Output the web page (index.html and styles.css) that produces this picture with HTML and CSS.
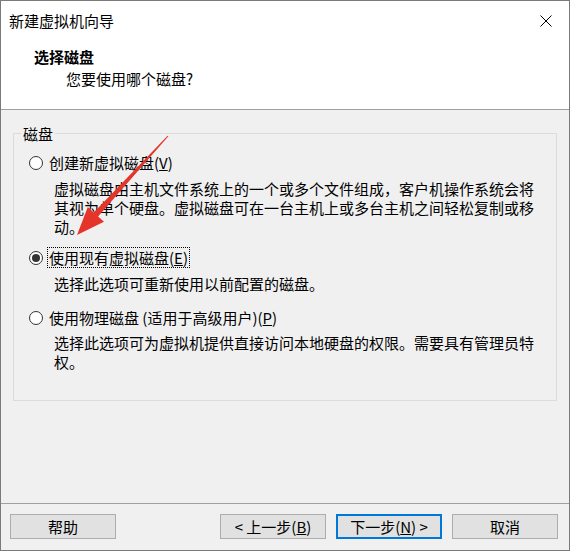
FILE: index.html
```html
<!DOCTYPE html>
<html lang="zh-CN">
<head>
<meta charset="utf-8">
<title>新建虚拟机向导</title>
<link rel="stylesheet" href="styles.css">
</head>
<body>
<div class="window">
  <div class="titlebar">
    <span class="title">新建虚拟机向导</span>
    <span class="close">
      <svg width="12" height="12" viewBox="0 0 12 12"><path d="M0.5 0.5 L11.5 11.5 M11.5 0.5 L0.5 11.5" stroke="#000" stroke-width="1" fill="none"/></svg>
    </span>
  </div>
  <div class="header">
    <div class="h-title">选择磁盘</div>
    <div class="h-sub">您要使用哪个磁盘?</div>
  </div>
  <div class="main">
    <fieldset class="group">
      <legend class="legend">磁盘</legend>
      <div class="options">
        <div class="option">
          <div class="opt-row"><span class="radio"></span><span class="opt-label">创建新虚拟磁盘(<u>V</u>)</span></div>
          <div class="desc">虚拟磁盘由主机文件系统上的一个或多个文件组成，客户机操作系统会将<br>其视为单个硬盘。虚拟磁盘可在一台主机上或多台主机之间轻松复制或移<br>动。</div>
        </div>
        <div class="option opt-2">
          <div class="opt-row"><span class="radio checked"></span><span class="opt-label focus">使用现有虚拟磁盘(<u>E</u>)</span></div>
          <div class="desc">选择此选项可重新使用以前配置的磁盘。</div>
        </div>
        <div class="option opt-3">
          <div class="opt-row"><span class="radio"></span><span class="opt-label">使用物理磁盘 (适用于高级用户)(<u>P</u>)</span></div>
          <div class="desc">选择此选项可为虚拟机提供直接访问本地硬盘的权限。需要具有管理员特<br>权。</div>
        </div>
      </div>
    </fieldset>
  </div>
  <div class="footer">
    <button class="btn">帮助</button>
    <div class="spacer"></div>
    <button class="btn">&lt; 上一步(<u>B</u>)</button>
    <button class="btn default">下一步(<u>N</u>) &gt;</button>
    <button class="btn">取消</button>
  </div>
  <svg class="arrow" width="570" height="551" viewBox="0 0 570 551">
    <path d="M168.4 136.3 L167.6 135.7 L93.7 212.4 L87.8 207 L77 235 L104 221.8 L98.1 216.4 Z" fill="#e5352b"/>
  </svg>
</div>
</body>
</html>
```

FILE: styles.css
```css
* { box-sizing: border-box; }
body { margin: 0; background: #f0f0f0; }
.window {
  position: relative;
  width: 570px;
  height: 551px;
  border: 1px solid #7a7a7a;
  background: #f0f0f0;
  display: flex;
  flex-direction: column;
  font-family: "Noto Sans CJK SC", "Noto Sans", sans-serif;
  font-size: 15px;
  line-height: 19px;
  color: #000;
}
.titlebar {
  height: 39px;
  background: #fff;
  display: flex;
  align-items: center;
  justify-content: space-between;
  padding-left: 8px;
}
.close {
  width: 46px;
  height: 39px;
  display: flex;
  align-items: center;
  justify-content: center;
}
.header {
  background: #fff;
  height: 70px;
  padding: 7px 0 0 33px;
  border-bottom: 1px solid #a0a0a0;
}
.h-title { font-weight: bold; }
.h-sub { margin-top: 3px; padding-left: 32px; }
.main {
  flex: 1;
  padding: 14px 12px 0 12px;
}
.group {
  margin: 0;
  padding: 0 0 29px 0;
  border: 1px solid #dcdcdc;
  min-width: 0;
}
.legend {
  margin-left: 7px;
  padding: 0 2px;
  line-height: 19px;
}
.options { padding: 10px 0 0 15px; }
.opt-row { display: flex; align-items: center; height: 19px; }
.radio {
  width: 14px;
  height: 14px;
  border: 1px solid #333;
  border-radius: 50%;
  background: #fff;
  display: flex;
  align-items: center;
  justify-content: center;
  flex: none;
}
.radio.checked::after {
  content: "";
  width: 8px;
  height: 8px;
  border-radius: 50%;
  background: #333;
}
.opt-label { margin-left: 4px; padding: 0 1px; border: 1px dotted transparent; }
.opt-label.focus { border-color: #000; }
.desc { padding-left: 25px; margin-top: 7px; }
.opt-2 { margin-top: 12px; }
.opt-3 { margin-top: 15px; }
.opt-3 .desc { margin-top: 6px; }
.footer {
  height: 47px;
  border-top: 1px solid #a0a0a0;
  display: flex;
  align-items: flex-start;
  gap: 10px;
  padding: 10px 11px 0 9px;
}
.spacer { flex: 1; }
.btn {
  width: 106px;
  height: 25px;
  border: 1px solid #adadad;
  background: #e1e1e1;
  font: inherit;
  line-height: 19px;
  color: #000;
  padding: 0;
}
.btn.default { border: 2px solid #0078d7; }
.arrow {
  position: absolute;
  left: -1px;
  top: -1px;
  pointer-events: none;
}
```
